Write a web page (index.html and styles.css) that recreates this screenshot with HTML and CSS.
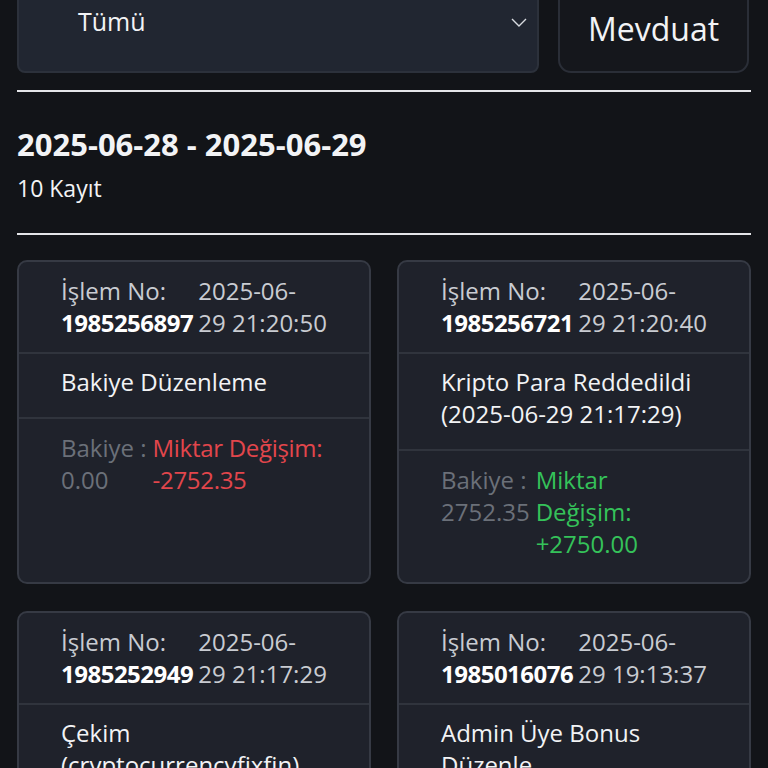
FILE: index.html
```html
<!DOCTYPE html>
<html lang="tr">
<head>
  <meta charset="UTF-8">
  <title>Hesap Hareketleri</title>
  <link rel="stylesheet" href="styles.css">
</head>
<body>

<div class="page">
  <div class="filters">
    <div class="select">
      <span>Tümü</span>
      <svg class="chevron" width="16" height="10" viewBox="0 0 16 10"><path d="M1 1l7 7 7-7" fill="none" stroke="#d8dbe0" stroke-width="1.4"/></svg>
    </div>
    <button class="deposit">Mevduat</button>
  </div>

  <hr class="rule">

  <div class="summary">
    <h2>2025-06-28 - 2025-06-29</h2>
    <p>10 Kayıt</p>
  </div>

  <hr class="rule">

  <div class="cards">
    <div class="card">
      <div class="row head">
        <div class="no">İşlem No:<br><b>1985256897</b></div>
        <div class="date">2025-06-<br>29 21:20:50</div>
      </div>
      <div class="row title">Bakiye Düzenleme</div>
      <div class="row amounts">
        <div class="balance">Bakiye :<br>0.00</div>
        <div class="change minus">Miktar Değişim:<br>-2752.35</div>
      </div>
    </div>

    <div class="card">
      <div class="row head">
        <div class="no">İşlem No:<br><b>1985256721</b></div>
        <div class="date">2025-06-<br>29 21:20:40</div>
      </div>
      <div class="row title">Kripto Para Reddedildi (2025-06-29 21:17:29)</div>
      <div class="row amounts">
        <div class="balance">Bakiye :<br>2752.35</div>
        <div class="change plus">Miktar<br>Değişim:<br>+2750.00</div>
      </div>
    </div>

    <div class="card">
      <div class="row head">
        <div class="no">İşlem No:<br><b>1985252949</b></div>
        <div class="date">2025-06-<br>29 21:17:29</div>
      </div>
      <div class="row title">Çekim (cryptocurrencyfixfin)</div>
      <div class="row amounts">
        <div class="balance">Bakiye :<br>2.35</div>
        <div class="change minus">Miktar Değişim:<br>-2750.00</div>
      </div>
    </div>

    <div class="card">
      <div class="row head">
        <div class="no">İşlem No:<br><b>1985016076</b></div>
        <div class="date">2025-06-<br>29 19:13:37</div>
      </div>
      <div class="row title">Admin Üye Bonus Düzenle</div>
      <div class="row amounts">
        <div class="balance">Bakiye :<br>2752.35</div>
        <div class="change plus">Miktar<br>Değişim:<br>+2750.00</div>
      </div>
    </div>
  </div>
</div>

</body>
</html>
```

FILE: styles.css
```css
:root {
  --bg: #121418;
  --card-bg: #1f222b;
  --card-border: #363a44;
  --text: #f2f3f5;
  --muted: #c9ccd2;
  --label: #6b7079;
  --red: #e2464c;
  --green: #35c25a;
}

* { box-sizing: border-box; }

body {
  margin: 0;
  background: var(--bg);
  color: var(--text);
  font-family: 'Open Sans', Lato, sans-serif;
  overflow: hidden;
}

.page {
  padding: 0 17px;
}

.filters {
  display: flex;
  align-items: flex-end;
  gap: 19px;
  margin-top: -30px;
}

.select {
  flex: 1;
  height: 103px;
  display: flex;
  align-items: center;
  justify-content: space-between;
  padding: 0 10px 0 59px;
  background: #212631;
  border: 2px solid #2c313b;
  border-radius: 8px;
  font-size: 25px;
}

.select span { margin-top: -2px; }

.chevron { margin-top: 2px; }

.deposit {
  width: 191px;
  height: 85px;
  margin-right: 2px;
  padding: 0 0 4px;
  background: #15171c;
  border: 2px solid #2a2e37;
  border-radius: 13px;
  color: var(--text);
  font-family: inherit;
  font-size: 32px;
}

.rule {
  border: none;
  height: 2px;
  background: #e4e5e8;
  margin: 17px 0 0;
}

.summary {
  padding: 33px 0 12px;
}

.summary h2 {
  margin: 0;
  font-size: 31px;
  font-weight: 700;
  line-height: 38px;
}

.summary p {
  margin: 9px 0 0;
  font-size: 23px;
  line-height: 32px;
}

.cards {
  display: grid;
  grid-template-columns: 1fr 1fr;
  gap: 27px 26px;
  margin-top: 25px;
}

.card {
  background: var(--card-bg);
  border: 2px solid var(--card-border);
  border-radius: 10px;
  font-size: 24px;
  line-height: 32px;
  display: flex;
  flex-direction: column;
}

.row {
  padding: 13px 42px 19px;
  border-top: 2px solid #30343d;
}

.row:first-child { border-top: none; }

.head {
  display: flex;
  gap: 5px;
  padding-bottom: 13px;
  color: var(--muted);
  white-space: nowrap;
}

.head b {
  color: #fff;
  font-weight: 700;
  letter-spacing: -0.5px;
}

.title {
  padding-top: 12px;
}

.amounts {
  flex: 1;
  display: flex;
  gap: 6px;
  padding-bottom: 22px;
  color: var(--label);
  white-space: nowrap;
}

.balance { flex: none; }

.minus { color: var(--red); letter-spacing: -0.3px; }
.plus { color: var(--green); }
```
